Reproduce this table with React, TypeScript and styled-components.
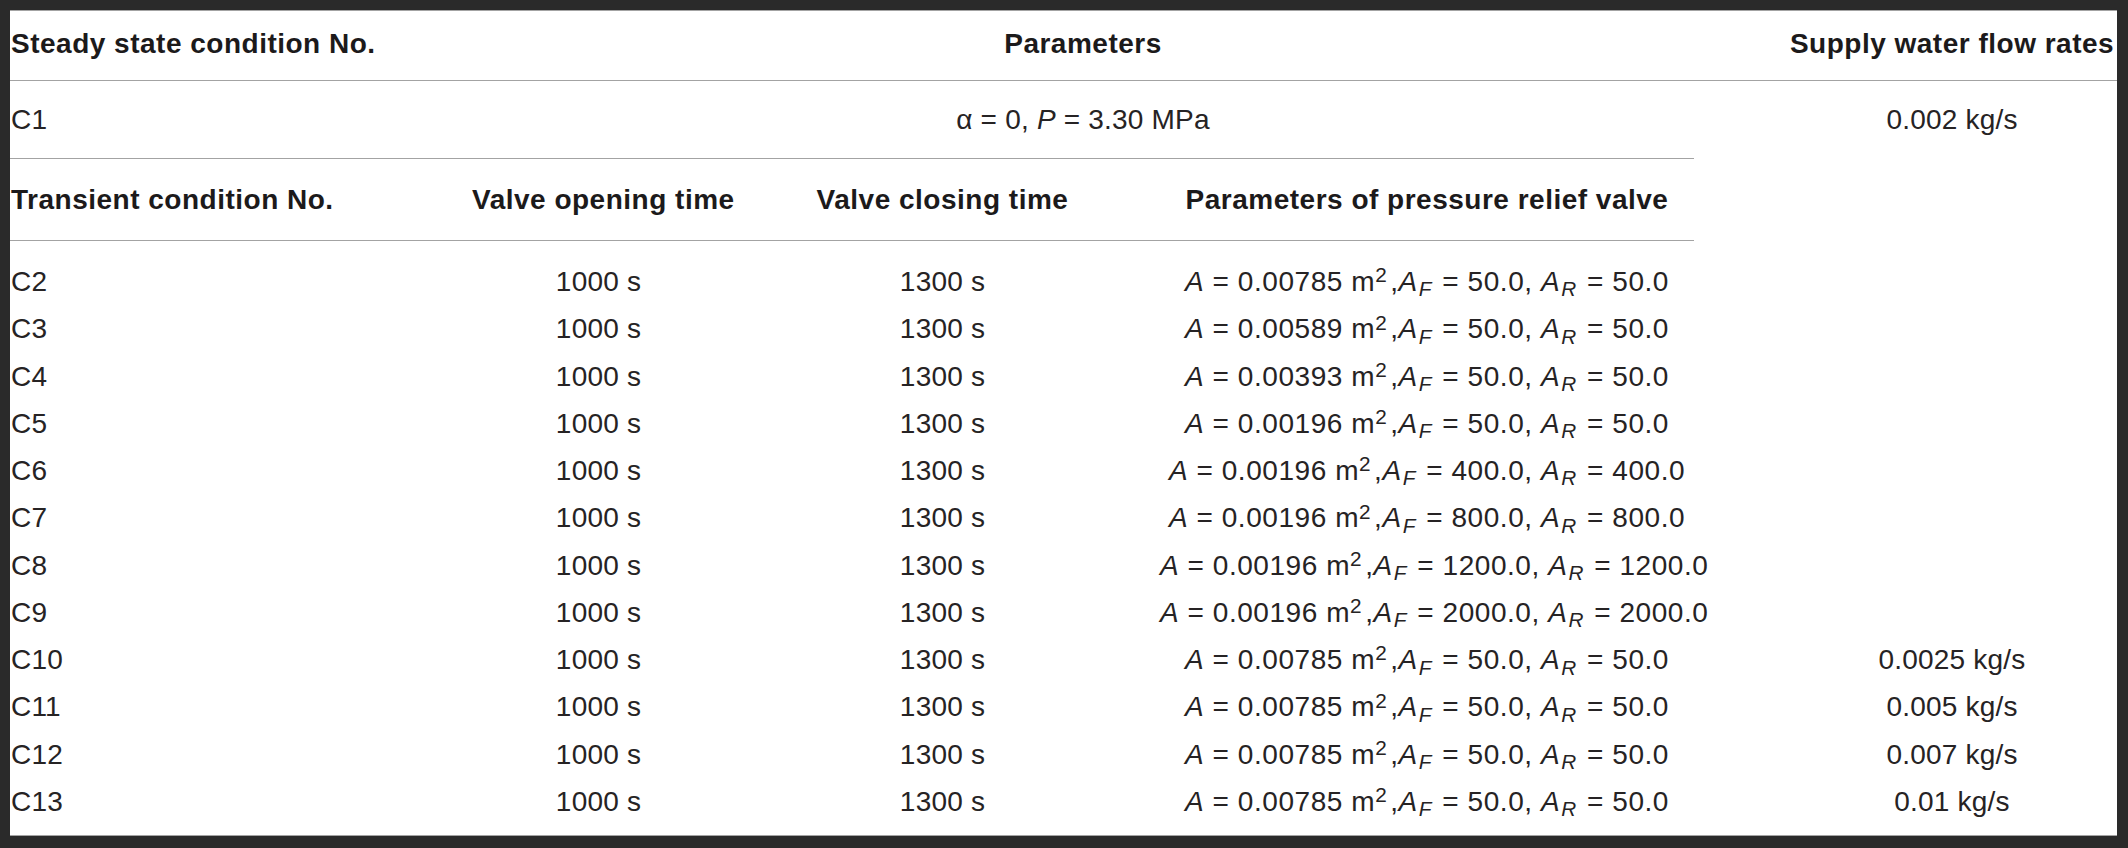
import React from 'react';
import styled, { createGlobalStyle, css } from 'styled-components';

const GlobalStyle = createGlobalStyle`
  html, body {
    margin: 0;
    padding: 0;
    background: #2a2a2a;
  }
  body {
    font-family: "Liberation Sans", Arial, Helvetica, sans-serif;
  }
`;

const Frame = styled.div`
  box-sizing: border-box;
  width: 2128px;
  height: 848px;
  padding: 10px 11px 12px 10px;
  background: #2a2a2a;
`;

const Sheet = styled.div`
  height: 100%;
  background: #ffffff;
  overflow: hidden;
`;

const Table = styled.table`
  width: 2200px;
  table-layout: fixed;
  border-collapse: collapse;
  border-top: 1px solid #a3a3a3;
  color: #231f20;
  font-size: 28px;
`;

const Col = styled.col<{ $w: number }>`
  width: ${(p) => p.$w}px;
`;

type RowKind = 'head' | 'steady' | 'subhead' | 'data';

const rowPadding: Record<RowKind, [number, number, string]> = {
  head: [17, 20, '32px'],
  steady: [23, 22, '32px'],
  subhead: [25, 24, '32px'],
  data: [0, 0, '47.27px'],
};

const Row = styled.tr<{ $kind: RowKind; $first?: boolean; $last?: boolean }>`
  & > th,
  & > td {
    padding-top: ${(p) => (p.$first ? 17 : rowPadding[p.$kind][0])}px;
    padding-bottom: ${(p) => (p.$last ? 10 : rowPadding[p.$kind][1])}px;
    line-height: ${(p) => rowPadding[p.$kind][2]};
  }
`;

const cellBase = css<{ $left?: boolean; $rule?: boolean }>`
  padding-left: ${(p) => (p.$left ? '1px' : '0')};
  padding-right: 0;
  text-align: ${(p) => (p.$left ? 'left' : 'center')};
  vertical-align: top;
  white-space: nowrap;
  border-bottom: ${(p) => (p.$rule ? '1px solid #a3a3a3' : '0')};
`;

const HeadCell = styled.th<{ $left?: boolean; $rule?: boolean }>`
  ${cellBase};
  font-weight: 700;
  letter-spacing: 0.5px;
  color: #1c1a1b;
`;

const Cell = styled.td<{ $left?: boolean; $rule?: boolean }>`
  ${cellBase};
  font-weight: 400;
  letter-spacing: 0.2px;
  color: #262324;
`;

const Formula = styled.span`
  letter-spacing: 0.55px;
`;

const Var = styled.i`
  font-style: italic;
`;

const Sup = styled.sup`
  position: relative;
  top: -0.42em;
  margin-right: 3px;
  font-size: 0.74em;
  line-height: 0;
  vertical-align: baseline;
`;

const Sub = styled.sub`
  position: relative;
  top: 0.26em;
  margin-left: 1px;
  margin-right: 2px;
  font-size: 0.74em;
  font-style: italic;
  line-height: 0;
  vertical-align: baseline;
`;

type Transient = {
  id: string;
  area: string;
  coef: string;
  flow?: string;
};

const transients: Transient[] = [
  { id: 'C2', area: '0.00785', coef: '50.0' },
  { id: 'C3', area: '0.00589', coef: '50.0' },
  { id: 'C4', area: '0.00393', coef: '50.0' },
  { id: 'C5', area: '0.00196', coef: '50.0' },
  { id: 'C6', area: '0.00196', coef: '400.0' },
  { id: 'C7', area: '0.00196', coef: '800.0' },
  { id: 'C8', area: '0.00196', coef: '1200.0' },
  { id: 'C9', area: '0.00196', coef: '2000.0' },
  { id: 'C10', area: '0.00785', coef: '50.0', flow: '0.0025 kg/s' },
  { id: 'C11', area: '0.00785', coef: '50.0', flow: '0.005 kg/s' },
  { id: 'C12', area: '0.00785', coef: '50.0', flow: '0.007 kg/s' },
  { id: 'C13', area: '0.00785', coef: '50.0', flow: '0.01 kg/s' },
];

const ReliefValve: React.FC<{ area: string; coef: string }> = ({ area, coef }) => (
  <Formula>
    <Var>A</Var> = {area} m<Sup>2</Sup>,<Var>A</Var>
    <Sub>F</Sub> = {coef}, <Var>A</Var>
    <Sub>R</Sub> = {coef}
  </Formula>
);

const App: React.FC = () => {
  const last = transients.length - 1;

  return (
    <>
      <GlobalStyle />
      <Frame>
        <Sheet>
          <Table>
            <colgroup>
              <Col $w={462} />
              <Col $w={253} />
              <Col $w={435} />
              <Col $w={534} />
              <Col $w={516} />
            </colgroup>
            <thead>
              <Row $kind="head">
                <HeadCell $left $rule>
                  Steady state condition No.
                </HeadCell>
                <HeadCell colSpan={3} $rule>
                  Parameters
                </HeadCell>
                <HeadCell $rule>Supply water flow rates</HeadCell>
              </Row>
            </thead>
            <tbody>
              <Row $kind="steady">
                <Cell $left $rule>
                  C1
                </Cell>
                <Cell colSpan={3} $rule>
                  α = 0, <Var>P</Var> = 3.30 MPa
                </Cell>
                <Cell>0.002 kg/s</Cell>
              </Row>
              <Row $kind="subhead">
                <HeadCell $left $rule>
                  Transient condition No.
                </HeadCell>
                <HeadCell $rule>Valve opening time</HeadCell>
                <HeadCell $rule>Valve closing time</HeadCell>
                <HeadCell $rule>Parameters of pressure relief valve</HeadCell>
                <Cell />
              </Row>
              {transients.map((t, i) => (
                <Row key={t.id} $kind="data" $first={i === 0} $last={i === last}>
                  <Cell $left $rule={i === last}>
                    {t.id}
                  </Cell>
                  <Cell $rule={i === last}>1000 s</Cell>
                  <Cell $rule={i === last}>1300 s</Cell>
                  <Cell $rule={i === last}>
                    <ReliefValve area={t.area} coef={t.coef} />
                  </Cell>
                  <Cell $rule={i === last}>{t.flow ?? ''}</Cell>
                </Row>
              ))}
            </tbody>
          </Table>
        </Sheet>
      </Frame>
    </>
  );
};

export default App;
